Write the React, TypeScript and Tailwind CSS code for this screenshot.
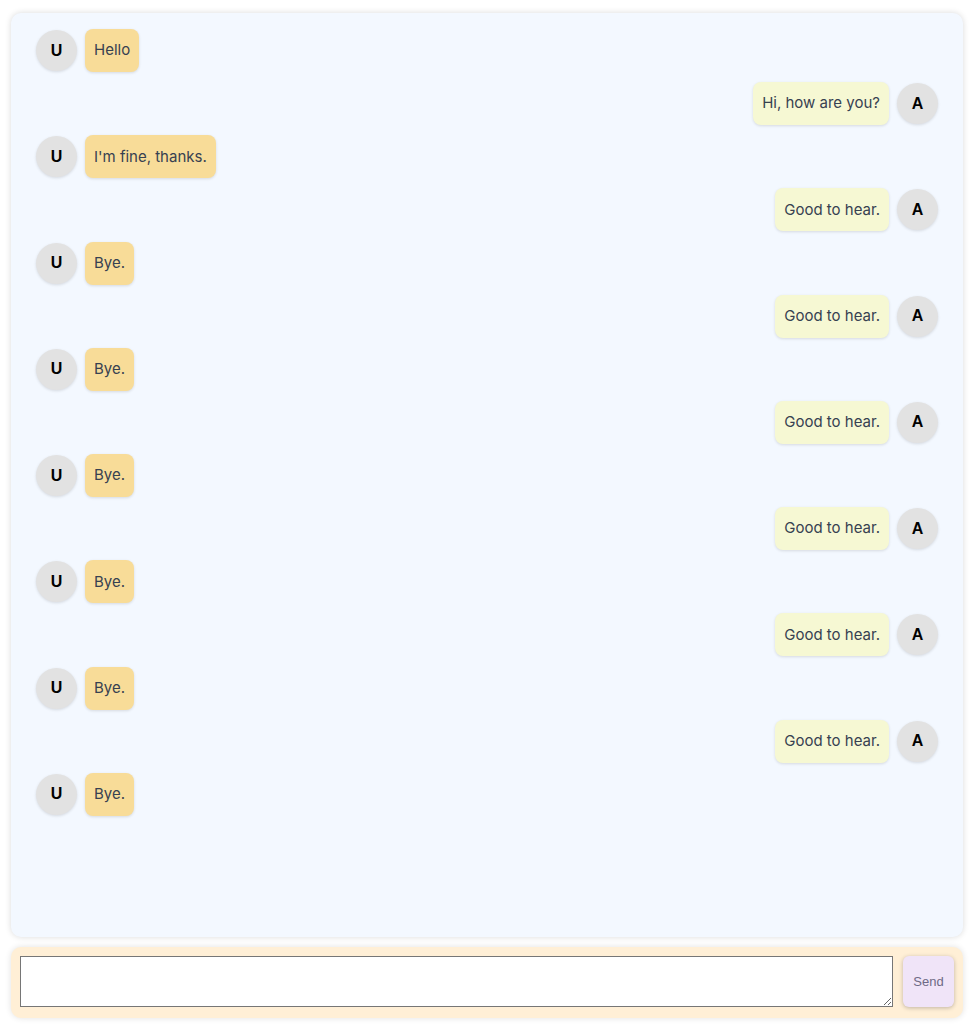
import React from 'react';

type Msg = { from: 'user' | 'ai'; text: string };

const messages: Msg[] = [
  { from: 'user', text: 'Hello' },
  { from: 'ai', text: 'Hi, how are you?' },
  { from: 'user', text: "I'm fine, thanks." },
  { from: 'ai', text: 'Good to hear.' },
  { from: 'user', text: 'Bye.' },
  { from: 'ai', text: 'Good to hear.' },
  { from: 'user', text: 'Bye.' },
  { from: 'ai', text: 'Good to hear.' },
  { from: 'user', text: 'Bye.' },
  { from: 'ai', text: 'Good to hear.' },
  { from: 'user', text: 'Bye.' },
  { from: 'ai', text: 'Good to hear.' },
  { from: 'user', text: 'Bye.' },
  { from: 'ai', text: 'Good to hear.' },
  { from: 'user', text: 'Bye.' },
];

function Avatar({ letter }: { letter: string }) {
  return (
    <div className="w-[41px] h-[41px] shrink-0 rounded-full bg-[#e2e2e2] shadow-[0_1px_3px_rgba(0,0,0,0.12)] flex items-center justify-center font-['Liberation_Sans',Arial,sans-serif] font-bold text-[16px] text-black">
      {letter}
    </div>
  );
}

function Bubble({ msg }: { msg: Msg }) {
  const isUser = msg.from === 'user';
  return (
    <div
      className={`h-[43px] flex items-center px-[9px] rounded-[8px] text-[15px] text-[#374151] shadow-[0_1px_3px_rgba(0,0,0,0.12)] ${
        isUser ? 'bg-[#f8dc98]' : 'bg-[#f6f8d3]'
      }`}
    >
      {msg.text}
    </div>
  );
}

export default function App() {
  return (
    <div className="h-[1027px] bg-white pl-[11px] pr-[9px] pt-[13px] pb-[9px] flex flex-col gap-[10px] font-['Inter',sans-serif]">
      <div className="h-[924px] rounded-[10px] bg-[#f3f8ff] shadow-[0_0_6px_rgba(0,0,0,0.15)] px-[24px] pt-[16px] flex flex-col gap-[10.14px]">
        {messages.map((m, i) =>
          m.from === 'user' ? (
            <div key={i} className="flex items-center gap-[8px] pl-[1px]">
              <Avatar letter="U" />
              <Bubble msg={m} />
            </div>
          ) : (
            <div key={i} className="flex items-center justify-end gap-[8px] pr-[1px]">
              <Bubble msg={m} />
              <Avatar letter="A" />
            </div>
          )
        )}
      </div>
      <div className="h-[71px] rounded-[10px] bg-[#ffefd6] shadow-[0_0_6px_rgba(0,0,0,0.12)] px-[9px] pt-[9px] pb-[11px] flex items-stretch gap-[10px]">
        <textarea className="flex-1 border border-[#767676] bg-white resize-y" />
        <button className="w-[51px] rounded-[6px] bg-[#f0e4f8] shadow-[0_1px_4px_rgba(0,0,0,0.25)] text-[13px] text-[#6e6a85] font-['Liberation_Sans',Arial,sans-serif]">
          Send
        </button>
      </div>
    </div>
  );
}
